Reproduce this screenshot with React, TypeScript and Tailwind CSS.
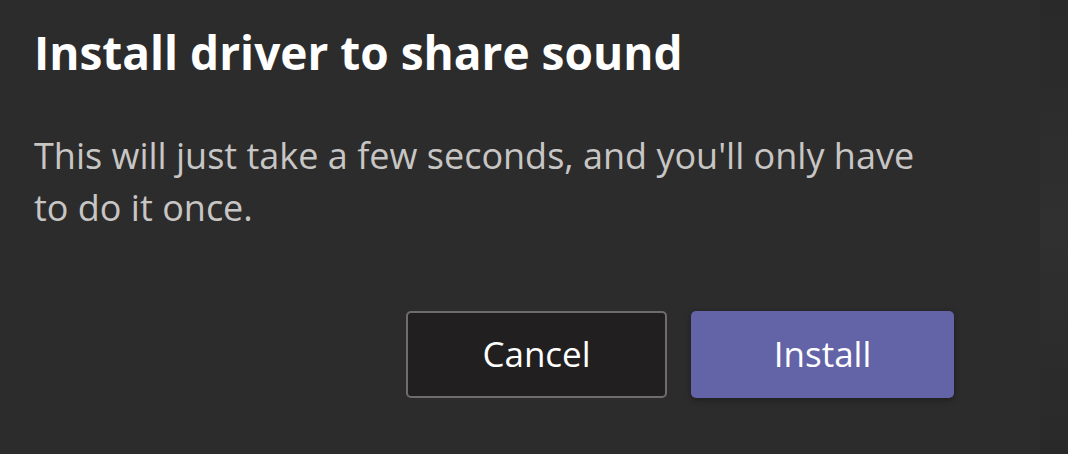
export default function App() {
  return (
    <div
      className="flex h-[454px] w-[1068px] overflow-hidden bg-[#2d2c2c] text-white"
      style={{ fontFamily: '"Open Sans", "Noto Sans", sans-serif' }}
    >
      <div className="flex w-[1040px] flex-col pl-[34px] pt-[22px]">
        <h1 className="text-[46px] font-bold leading-[60px] text-white">
          Install driver to share sound
        </h1>
        <p className="mt-[48px] text-[36px] leading-[52px] text-[#c8c6c4]">
          This will just take a few seconds, and you'll only have
          <br />
          to do it once.
        </p>
        <div className="mt-[77px] flex justify-end gap-[24px] pr-[86px]">
          <button className="h-[87px] w-[261px] rounded-[5px] border-2 border-[#6e6d6c] bg-[#211f1f] text-[35px] font-medium text-white">
            Cancel
          </button>
          <button className="h-[87px] w-[263px] rounded-[5px] bg-[#6264a7] text-[35px] font-medium text-white shadow-[0_2px_6px_rgba(0,0,0,0.35)]">
            Install
          </button>
        </div>
      </div>
      <div className="flex-1 bg-gradient-to-b from-[#2a2929] via-[#303030] to-[#292929]" />
    </div>
  );
}
